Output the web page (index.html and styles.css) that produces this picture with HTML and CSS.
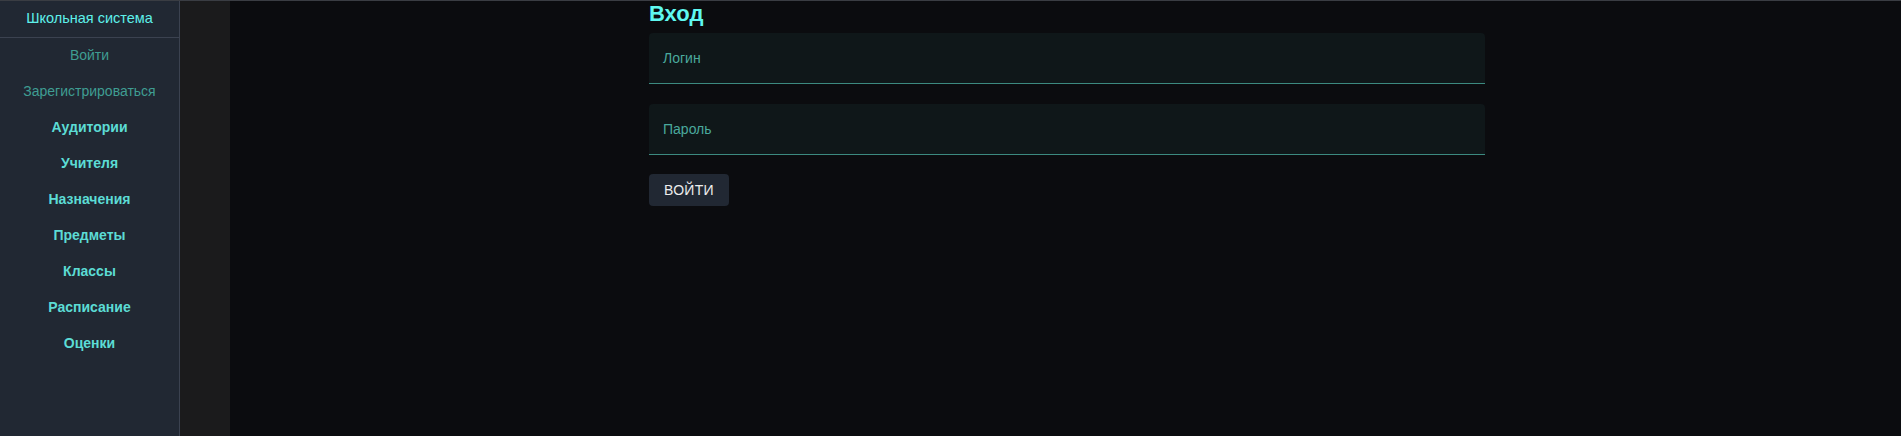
FILE: index.html
```html
<!DOCTYPE html>
<html lang="ru">
<head>
<meta charset="utf-8">
<title>Вход</title>
<link rel="stylesheet" href="styles.css">
</head>
<body>
<div class="layout">
  <aside class="sidebar">
    <div class="sidebar-title">Школьная система</div>
    <nav class="nav">
      <a class="nav-item muted">Войти</a>
      <a class="nav-item muted">Зарегистрироваться</a>
      <a class="nav-item">Аудитории</a>
      <a class="nav-item">Учителя</a>
      <a class="nav-item">Назначения</a>
      <a class="nav-item">Предметы</a>
      <a class="nav-item">Классы</a>
      <a class="nav-item">Расписание</a>
      <a class="nav-item">Оценки</a>
    </nav>
  </aside>
  <div class="gutter"></div>
  <main class="main">
    <div class="content">
      <h1 class="title">Вход</h1>
      <div class="field"><span class="field-label">Логин</span></div>
      <div class="field"><span class="field-label">Пароль</span></div>
      <button class="btn">ВОЙТИ</button>
    </div>
  </main>
</div>
</body>
</html>
```
FILE: styles.css
```css
html, body {
  margin: 0;
  padding: 0;
  height: 100%;
}
body {
  background: #0b0c0f;
  font-family: "Liberation Sans", Arial, sans-serif;
  font-size: 14px;
  border-top: 1px solid #3a3d43;
  box-sizing: border-box;
  overflow: hidden;
}
.layout {
  display: flex;
  height: 100%;
}
.sidebar {
  width: 179px;
  background: #212833;
  border-right: 1px solid #3b4250;
  display: flex;
  flex-direction: column;
}
.sidebar-title {
  height: 36px;
  line-height: 34px;
  text-align: center;
  font-size: 14.5px;
  color: #5ef0ea;
  border-bottom: 1px solid #3b4250;
}
.nav {
  display: flex;
  flex-direction: column;
  padding-top: 0;
}
.nav-item {
  height: 36px;
  line-height: 34px;
  text-align: center;
  color: #5cdcd5;
  font-weight: bold;
  cursor: pointer;
}
.nav-item.muted {
  color: #3f9d92;
  font-weight: normal;
}
.gutter {
  width: 50px;
  background: #1b1b1c;
}
.main {
  flex: 1;
  display: flex;
  justify-content: center;
}
.content {
  width: 836px;
  margin-left: 3px;
}
.title {
  margin: 0;
  height: 32px;
  line-height: 26px;
  font-size: 22px;
  font-weight: bold;
  color: #5ff8f0;
}
.field {
  height: 50px;
  background: #0f1719;
  border-radius: 4px 4px 0 0;
  border-bottom: 1px solid #3c8a80;
  display: flex;
  align-items: center;
  padding-left: 14px;
  margin-bottom: 20px;
}
.field-label {
  color: #4aa99d;
  font-size: 14px;
}
.btn {
  height: 32px;
  padding: 0 15px;
  background: #212833;
  border: none;
  border-radius: 4px;
  color: #ececec;
  font-family: "Liberation Sans", Arial, sans-serif;
  font-size: 14px;
  font-weight: 500;
  letter-spacing: 0.3px;
  margin-top: -1px;
}
```
